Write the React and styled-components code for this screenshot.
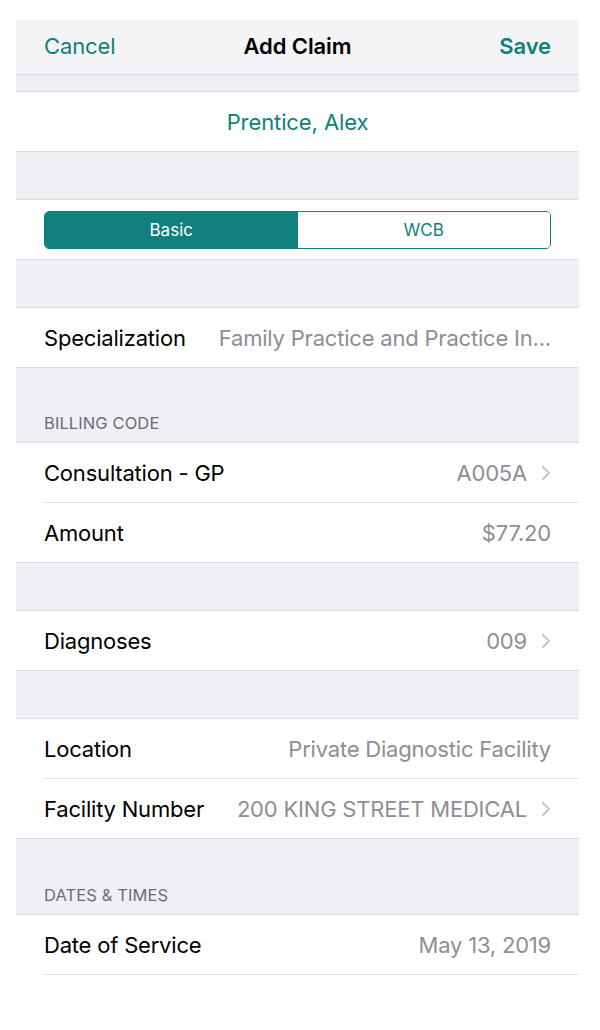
import styled, { createGlobalStyle } from "styled-components";

const Global = createGlobalStyle`
  body {
    margin: 0;
    background: #ffffff;
    font-family: Inter, "Noto Sans", sans-serif;
    -webkit-font-smoothing: antialiased;
  }
`;

const TEAL = "#0f807b";

const Screen = styled.div`
  width: 563px;
  margin: 20px 0 0 16px;
  background: #efeff4;
`;

const NavBar = styled.div`
  height: 54px;
  background: #f4f4f6;
  border-bottom: 1px solid #d9d9de;
  display: grid;
  grid-template-columns: 1fr auto 1fr;
  align-items: center;
  padding: 0 28px 3px;
  box-sizing: border-box;
  height: 55px;
`;

const NavButton = styled.span`
  font-size: 22px;
  color: ${TEAL};
  font-weight: ${({ $bold }) => ($bold ? 600 : 400)};
  justify-self: ${({ $end }) => ($end ? "end" : "start")};
  letter-spacing: -0.1px;
`;

const NavTitle = styled.span`
  font-size: 22px;
  font-weight: 600;
  color: #000;
  letter-spacing: -0.1px;
`;

const Gap = styled.div`
  height: ${({ $h }) => $h}px;
`;

const SectionHeader = styled.div`
  height: ${({ $h }) => $h}px;
  display: flex;
  align-items: flex-end;
  padding: 0 28px 9px;
  box-sizing: border-box;
  font-size: 16.5px;
  color: #6d6d72;
  letter-spacing: 0.1px;
`;

const Group = styled.div`
  background: #fff;
  border-top: 1px solid #dcdce0;
  border-bottom: ${({ $noBottom }) => ($noBottom ? "none" : "1px solid #dcdce0")};
`;

const Row = styled.div`
  height: 59px;
  margin-left: 28px;
  padding-right: 28px;
  display: flex;
  align-items: center;
  justify-content: space-between;
  gap: 28px;
  & + & {
    border-top: 1px solid #e1e1e5;
  }
`;

const CenterRow = styled.div`
  height: 59px;
  display: flex;
  align-items: center;
  justify-content: center;
`;

const LastLine = styled.div`
  margin-left: 28px;
  border-top: 1px solid #e1e1e5;
  background: #fff;
`;

const Label = styled.span`
  font-size: 22px;
  color: #000;
  white-space: nowrap;
  letter-spacing: -0.2px;
`;

const Patient = styled.span`
  font-size: 22px;
  color: ${TEAL};
  letter-spacing: -0.1px;
`;

const Value = styled.span`
  font-size: 22px;
  color: #8e8e93;
  white-space: nowrap;
  overflow: hidden;
  min-width: 0;
  display: flex;
  align-items: center;
  gap: 14px;
  letter-spacing: -0.2px;
`;

const ValueText = styled.span`
  overflow: hidden;
  text-overflow: ellipsis;
`;

const SegRow = styled.div`
  height: 59px;
  padding: 0 28px;
  display: flex;
  align-items: center;
`;

const Segmented = styled.div`
  flex: 1;
  height: 38px;
  display: grid;
  grid-template-columns: 1fr 1fr;
  border: 1px solid ${TEAL};
  border-radius: 5px;
  overflow: hidden;
  box-sizing: border-box;
`;

const Segment = styled.div`
  display: flex;
  align-items: center;
  justify-content: center;
  font-size: 17px;
  color: ${({ $active }) => ($active ? "#fff" : TEAL)};
  background: ${({ $active }) => ($active ? TEAL : "#fff")};
`;

const Chevron = () => (
  <svg width="10" height="16" viewBox="0 0 10 16">
    <path d="M2 2 L8 8 L2 14" fill="none" stroke="#c4c4c9" strokeWidth="2" strokeLinecap="round" strokeLinejoin="round" />
  </svg>
);

const Tail = styled.div`
  background: #fff;
  height: 60px;
`;

export default function App() {
  return (
    <>
      <Global />
      <Screen>
        <NavBar>
          <NavButton>Cancel</NavButton>
          <NavTitle>Add Claim</NavTitle>
          <NavButton $bold $end>Save</NavButton>
        </NavBar>
        <Gap $h={16} />
        <Group>
          <CenterRow>
            <Patient>Prentice, Alex</Patient>
          </CenterRow>
        </Group>
        <Gap $h={47} />
        <Group>
          <SegRow>
            <Segmented>
              <Segment $active>Basic</Segment>
              <Segment>WCB</Segment>
            </Segmented>
          </SegRow>
        </Group>
        <Gap $h={47} />
        <Group>
          <Row>
            <Label>Specialization</Label>
            <Value>
              <ValueText>Family Practice and Practice In...</ValueText>
            </Value>
          </Row>
        </Group>
        <SectionHeader $h={74}>BILLING CODE</SectionHeader>
        <Group>
          <Row>
            <Label>Consultation - GP</Label>
            <Value>
              <ValueText>A005A</ValueText>
              <Chevron />
            </Value>
          </Row>
          <Row>
            <Label>Amount</Label>
            <Value>
              <ValueText>$77.20</ValueText>
            </Value>
          </Row>
        </Group>
        <Gap $h={47} />
        <Group>
          <Row>
            <Label>Diagnoses</Label>
            <Value>
              <ValueText>009</ValueText>
              <Chevron />
            </Value>
          </Row>
        </Group>
        <Gap $h={47} />
        <Group>
          <Row>
            <Label>Location</Label>
            <Value>
              <ValueText>Private Diagnostic Facility</ValueText>
            </Value>
          </Row>
          <Row>
            <Label>Facility Number</Label>
            <Value>
              <ValueText>200 KING STREET MEDICAL</ValueText>
              <Chevron />
            </Value>
          </Row>
        </Group>
        <SectionHeader $h={75}>DATES &amp; TIMES</SectionHeader>
        <Group $noBottom>
          <Row>
            <Label>Date of Service</Label>
            <Value>
              <ValueText>May 13, 2019</ValueText>
            </Value>
          </Row>
          <LastLine />
        </Group>
        <Tail />
      </Screen>
    </>
  );
}
